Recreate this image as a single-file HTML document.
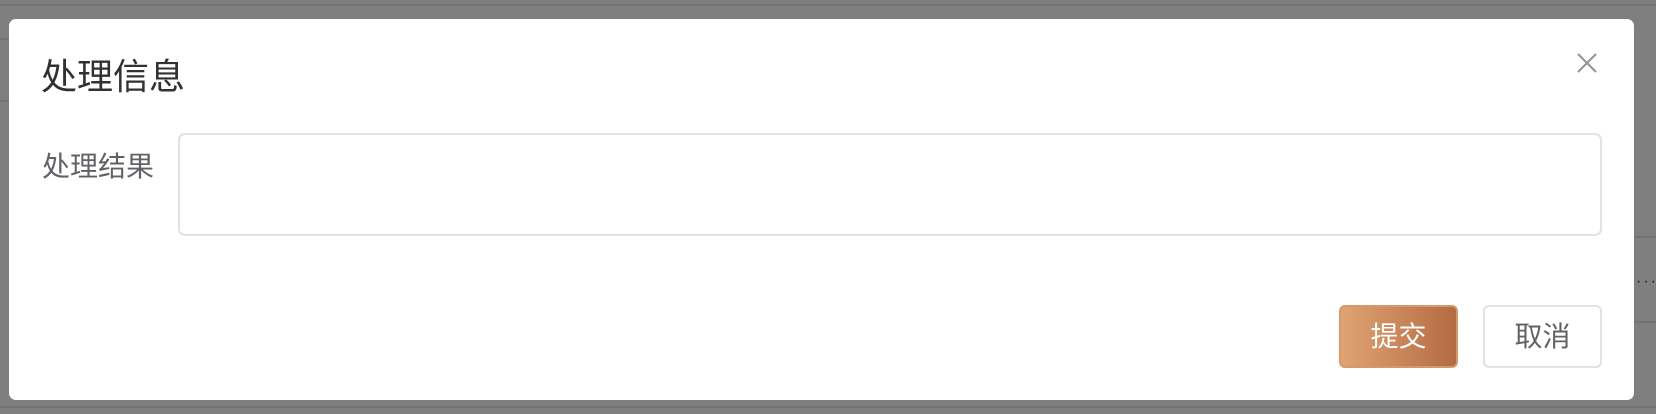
<!DOCTYPE html>
<html><head><meta charset="utf-8"><style>
html,body{margin:0;padding:0;}
body{width:1656px;height:414px;background:#7f7f7f;position:relative;overflow:hidden;font-family:"Liberation Sans","Noto Sans CJK SC",sans-serif;}
.ln{position:absolute;height:2px;background:#737373;}
.modal{position:absolute;left:9px;top:19px;width:1625px;height:381px;background:#fff;border-radius:7px;}
.title{position:absolute;left:41px;top:52px;font-size:36px;line-height:50px;color:#303133;}
.label{position:absolute;left:42px;top:148px;font-size:28px;line-height:38px;color:#606266;}
.ta{position:absolute;left:178px;top:133px;width:1420px;height:99px;border:2px solid #dfe2e8;border-radius:7px;box-sizing:content-box;}
.btn{position:absolute;top:305px;width:119px;height:63px;box-sizing:border-box;border-radius:6px;font-size:28px;line-height:59px;text-align:center;}
.ok{left:1339px;background:linear-gradient(90deg,#e0a373,#b46b42);border:2px solid #d49a6c;color:#fff;}
.no{left:1483px;background:#fff;border:2px solid #dfe2e8;color:#606266;}
</style></head><body>
<div class="ln" style="left:0;top:4px;width:1656px"></div>
<div class="ln" style="left:0;top:38px;width:9px"></div>
<div class="ln" style="left:0;top:100px;width:9px"></div>
<div class="ln" style="left:1634px;top:236px;width:22px"></div>
<div class="ln" style="left:1634px;top:321px;width:22px"></div>
<div class="ln" style="left:0;top:406px;width:1656px"></div>
<div style="position:absolute;left:1636px;top:273px;font-size:16px;color:#222;letter-spacing:2px">···</div>
<div class="modal"></div>
<div class="title">处理信息</div>
<svg style="position:absolute;left:1576px;top:52px" width="22" height="22" viewBox="0 0 22 22"><path d="M2 2L20 20M20 2L2 20" stroke="#909399" stroke-width="2"/></svg>
<div class="label">处理结果</div>
<div class="ta"></div>
<div class="btn ok">提交</div>
<div class="btn no">取消</div>
</body></html>
